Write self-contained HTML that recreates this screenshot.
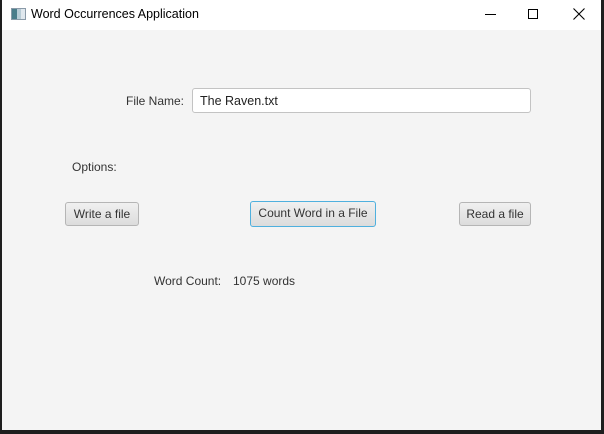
<!DOCTYPE html>
<html><head><style>
*{margin:0;padding:0;box-sizing:border-box}
body{width:604px;height:434px;background:#1e1e1e;position:relative;overflow:hidden;font-family:"Liberation Sans",sans-serif;font-size:12px;color:#333}
#win{position:absolute;left:2px;top:0;width:599px;height:430px;background:#f4f4f4}
#tb{position:absolute;left:0;top:0;width:599px;height:30px;background:#fff;color:#000}
.t{position:absolute;white-space:nowrap}
.btn{position:absolute;height:24px;border:1px solid #b5b5b5;border-radius:3px;background:linear-gradient(#f0f0f0,#dcdcdc);text-align:center;line-height:22px;font-size:12px;color:#333}
</style></head><body>
<div id="win">
<div id="tb">
 <div style="position:absolute;left:9px;top:8px;width:15px;height:12px;border:1px solid #8a9aa8;background:linear-gradient(90deg,#4a7d8a 0 40%,#b8ccd6 40% 70%,#e0e8ee 70%)"></div>
 <div class="t" style="left:29px;top:7px;font-size:12.5px">Word Occurrences Application</div>
 <div style="position:absolute;left:483px;top:14px;width:11px;height:1px;background:#000"></div>
 <div style="position:absolute;left:526px;top:9px;width:10px;height:10px;border:1px solid #000"></div>
 <svg style="position:absolute;left:571px;top:8px" width="12" height="12"><path d="M0.5 0.5L11.5 11.5M11.5 0.5L0.5 11.5" stroke="#000" stroke-width="1.1"/></svg>
</div>
<div class="t" style="left:124px;top:94px">File Name:</div>
<div style="position:absolute;left:190px;top:88px;width:339px;height:25px;background:#fff;border:1px solid #c3c3c3;border-radius:3px"></div>
<div class="t" style="left:198px;top:94px;color:#222;font-size:12.5px">The Raven.txt</div>
<div class="t" style="left:70px;top:160px">Options:</div>
<div class="btn" style="left:63px;top:202px;width:74px">Write a file</div>
<div class="btn" style="left:248px;top:201px;width:126px;height:26px;border:1.5px solid #4fb0de;line-height:23px">Count Word in a File</div>
<div class="btn" style="left:457px;top:202px;width:72px">Read a file</div>
<div class="t" style="left:152px;top:274px">Word Count:</div>
<div class="t" style="left:231px;top:274px">1075 words</div>
</div>
</body></html>
